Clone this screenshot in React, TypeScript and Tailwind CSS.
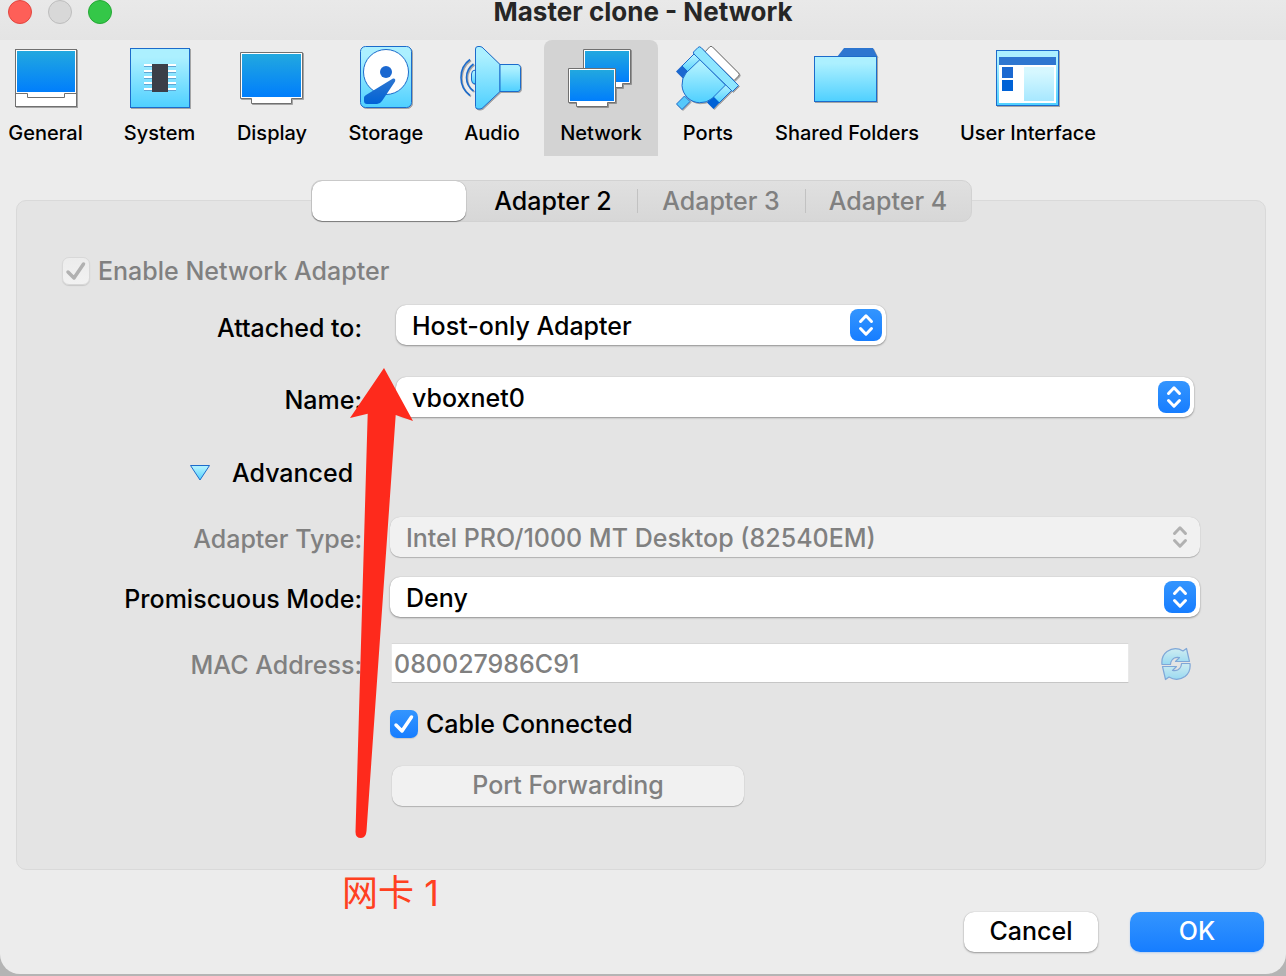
import type { ReactNode } from "react";

function Gradients() {
  return (
    <svg width="0" height="0" className="absolute" aria-hidden="true">
      <defs>
        <linearGradient id="screen" x1="0" y1="0" x2="0" y2="1">
          <stop offset="0" stopColor="#22a8df" />
          <stop offset="1" stopColor="#007efc" />
        </linearGradient>
        <linearGradient id="sky" x1="0" y1="0" x2="0" y2="1">
          <stop offset="0.15" stopColor="#acf0ff" />
          <stop offset="1" stopColor="#4fd0ff" />
        </linearGradient>
        <linearGradient id="deep" x1="0" y1="0" x2="0" y2="1">
          <stop offset="0" stopColor="#2e76d0" />
          <stop offset="1" stopColor="#0062d6" />
        </linearGradient>
      </defs>
    </svg>
  );
}

function Icon({ children, viewBox = "0 0 66 66" }: { children: ReactNode; viewBox?: string }) {
  return (
    <svg
      width="66"
      height="66"
      viewBox={viewBox}
      fill="none"
      aria-hidden="true"
      className="drop-shadow-[1px_1px_0px_#0000004d]"
    >
      {children}
    </svg>
  );
}

const GeneralIcon = () => (
  <Icon>
    <rect x="2.5" y="5.5" width="61" height="57" fill="#fff" stroke="#707070" />
    <rect x="4" y="7" width="58" height="41" fill="url(#screen)" />
    <path d="M2 49.500H14.500V53.500H51.500V49.500H64" stroke="#707070" />
  </Icon>
);

const SystemIcon = () => (
  <Icon>
    <rect x="3.500" y="4.500" width="59" height="59" fill="url(#sky)" stroke="#1c6bcb" />
    {[20, 26, 32, 38, 44].map((y) => (
      <g key={y}>
        <path d={`M17 ${y + 1}H49`} stroke="#fff" strokeWidth="2" />
        <path d={`M17 ${y + 2.5}H49`} stroke="#5fa6d4" />
      </g>
    ))}
    <rect x="25" y="20" width="16" height="28" fill="#3b3e48" />
  </Icon>
);

const DisplayIcon = () => (
  <Icon viewBox="1 0 66 66">
    <path d="M2.500 8.500H64.500V54.500H53.500V59.500H13.500V54.500H2.500Z" fill="#fff" stroke="#707070" />
    <rect x="4" y="10" width="59" height="43" fill="url(#screen)" />
  </Icon>
);

const StorageIcon = () => (
  <Icon>
    <rect x="7.500" y="2.500" width="51" height="61" rx="5" fill="url(#sky)" stroke="#1c6bcb" />
    <circle cx="33" cy="28" r="22.500" fill="#fff" stroke="#1c6bcb" />
    <circle cx="33" cy="28" r="6" fill="#1b68d0" />
    <path
      d="M40 34.500Q43 34 42 37.500L29 57Q27 60 24 60H14Q11 60 11 57V53.500Q11 52 13 51Z"
      fill="url(#deep)"
    />
  </Icon>
);

const AudioIcon = () => (
  <Icon viewBox="1 0 66 66">
    <g stroke="#1c6bcb">
      <path d="M17.500 26Q13.500 26 13.500 30V36Q13.500 40 17.500 40Z" fill="url(#sky)" />
      <path d="M15.500 20Q8.500 25 8.500 33.500T15.500 47M12 15.500Q3 22 3 33.500T12 51.500" strokeWidth="1.600" />
      <path
        d="M17.500 5Q17.500 2.500 20 2.500H22Q24 2.500 26 5L42 20.500V47.500L26 62.500Q24 65 22 65H20Q17.500 65 17.500 62.500Z"
        fill="url(#sky)"
      />
      <path d="M42 20.500H60Q62.500 21 62.500 23.500V44.500Q62.500 47 60 47.500H42Z" fill="url(#sky)" />
    </g>
  </Icon>
);

const NetworkIcon = () => (
  <Icon viewBox="2 0 66 66">
    <path d="M17.500 5.500H64.500V39.500H56.500V43.500H25.500V39.500H17.500Z" fill="#fff" stroke="#707070" />
    <rect x="19" y="7" width="44" height="31" fill="url(#screen)" />
    <path d="M2.500 24.500H49.500V58.500H41.500V62.500H10.500V58.500H2.500Z" fill="#fff" stroke="#707070" />
    <rect x="4" y="26" width="44" height="31" fill="url(#screen)" />
  </Icon>
);

const PortsIcon = () => (
  <Icon viewBox="1 0 66 66">
    <path d="M31 8L35.500 3Q37 1.500 38.500 3L64.500 29Q66 30.500 64.500 32L60 36.500Z" fill="#fff" stroke="#707070" />
    <path d="M20.500 9.500L8 22L15 29L28 16Z" fill="url(#sky)" stroke="#1c6bcb" />
    <path d="M8 21.500L2 27.500L9 34.500L15 28.500Z" fill="#1b68d0" />
    <path d="M57.500 46.500L45 59L38 52L51 39Z" fill="url(#sky)" stroke="#1c6bcb" />
    <path d="M45.500 58.500L39.500 65L33 58.500L39 52Z" fill="#0062d6" />
    <path d="M10.500 52L2.500 60L8 65.500L16 57.500Z" fill="#55c8fb" stroke="#1c6bcb" />
    <path d="M26 15.500L12 29A18.300 18.300 0 0 0 38 54.500L51.500 41Z" fill="url(#sky)" stroke="#1c6bcb" />
    <path d="M19.500 8L24 3.500Q25.500 2 27 3.500L64.500 41.500L58.500 47.500L20 10Q19 9 19.500 8Z" fill="#8ee6ff" stroke="#1c6bcb" />
  </Icon>
);

const FolderIcon = () => (
  <Icon viewBox="1 0 66 66">
    <path d="M24 13L31 4H60L64.500 13Z" fill="#2e76d0" />
    <rect x="1.500" y="12.500" width="62" height="45" fill="url(#sky)" stroke="#1c6bcb" />
  </Icon>
);

const InterfaceIcon = () => (
  <Icon>
    <rect x="1.500" y="6.500" width="62" height="55" fill="url(#sky)" stroke="#1c6bcb" />
    <rect x="4" y="13" width="57" height="8" fill="#2e76d0" />
    <rect x="4" y="21" width="57" height="38" fill="#fff" />
    <rect x="7" y="23" width="11" height="11" fill="#1b68d0" />
    <rect x="7" y="36" width="11" height="11" fill="#0062d6" />
    <rect x="29" y="23" width="30" height="34" fill="url(#sky)" opacity="0.500" />
  </Icon>
);

const tools = [
  { label: "General", width: "w-[107px]", icon: <GeneralIcon /> },
  { label: "System", width: "w-[105px]", icon: <SystemIcon /> },
  { label: "Display", width: "w-[104px]", icon: <DisplayIcon /> },
  { label: "Storage", width: "w-[108px]", icon: <StorageIcon /> },
  { label: "Audio", width: "w-[88px]", icon: <AudioIcon /> },
  { label: "Network", width: "w-[114px]", icon: <NetworkIcon />, active: true },
  { label: "Ports", width: "w-[84px]", icon: <PortsIcon /> },
  { label: "Shared Folders", width: "w-[178px]", icon: <FolderIcon /> },
  { label: "User Interface", width: "w-[168px]", icon: <InterfaceIcon /> },
];

function TitleBar() {
  return (
    <header className="grid h-10 grid-cols-[1fr_auto_1fr] items-start bg-linear-to-b from-[#e9e9e9] to-[#e4e4e4]">
      <div className="flex gap-4 pl-2">
        <button aria-label="Close" className="size-6 rounded-full border border-[#e2463f] bg-[#fe5f58]" />
        <button aria-label="Minimize" className="size-6 rounded-full border border-[#bdbdbd] bg-[#d8d8d8]" />
        <button aria-label="Zoom" className="size-6 rounded-full border border-[#24a834] bg-[#34c748]" />
      </div>
      <h1 className="text-[26px] leading-6 font-bold text-[#262626]">Master clone - Network</h1>
    </header>
  );
}

function Toolbar() {
  return (
    <nav className="-ml-2 flex gap-2">
      {tools.map((t) => (
        <button
          key={t.label}
          className={`flex h-[116px] shrink-0 flex-col items-center rounded-t-lg pt-1 text-xl leading-6 whitespace-nowrap ${t.width} ${
            t.active ? "bg-[#d3d3d3]" : ""
          }`}
        >
          {t.icon}
          <span className="mt-[11px]">{t.label}</span>
        </button>
      ))}
    </nav>
  );
}

function Tabs() {
  return (
    <div
      role="tablist"
      className="relative z-10 mx-auto -mb-[22px] flex items-center rounded-[10px] border border-[#d2d2d2] bg-linear-to-b from-[#e0e0e0] to-[#d7d7d7]"
    >
      <button
        role="tab"
        aria-selected="true"
        aria-label="Adapter 1"
        className="mr-1 h-10 w-[154px] rounded-[10px] bg-white shadow-[0_1px_1px_#00000066,0_0_1px_#00000066]"
      />
      <button role="tab" aria-selected="false" className="h-10 w-[167px]">Adapter 2</button>
      <span className="h-6 w-px bg-[#c2c2c2]" />
      <button role="tab" disabled className="h-10 w-[167px] text-[#808080]">Adapter 3</button>
      <span className="h-6 w-px bg-[#c2c2c2]" />
      <button role="tab" disabled className="h-10 w-[165px] text-[#808080]">Adapter 4</button>
    </div>
  );
}

function Dropdown({ id, value, disabled, className }: { id: string; value: string; disabled?: boolean; className: string }) {
  return (
    <div className={`relative ${className}`}>
      <select
        id={id}
        disabled={disabled}
        className="block h-10 w-full appearance-none rounded-[10px] bg-white px-4 pt-0.5 text-black opacity-100 shadow-[0_1px_2px_#00000059,0_0_1px_#00000040] disabled:bg-[#f1f1f1] disabled:text-[#808080] disabled:shadow-[0_1px_1px_#00000033,0_0_1px_#00000033]"
      >
        <option>{value}</option>
      </select>
      <span
        className={`pointer-events-none absolute top-1 right-1 flex size-8 items-center justify-center rounded-lg ${
          disabled ? "text-[#b1b1b1]" : "bg-linear-to-b from-[#3395fe] to-[#167dff] text-white"
        }`}
      >
        <svg width="16" height="24" viewBox="0 0 16 24" fill="none" stroke="currentColor" strokeWidth="3" strokeLinecap="round" strokeLinejoin="round" aria-hidden="true">
          <path d="M2.500 8.500L8 2.800L13.500 8.500M2.500 15.500L8 21.200L13.500 15.500" />
        </svg>
      </span>
    </div>
  );
}

function Check({ id, label, disabled, className }: { id: string; label: string; disabled?: boolean; className: string }) {
  return (
    <div className={`flex h-7 items-center gap-2 ${className}`}>
      <span className="relative size-7">
        <input
          id={id}
          type="checkbox"
          defaultChecked
          disabled={disabled}
          className="block size-7 appearance-none rounded-[7px] bg-linear-to-b from-[#3395fe] to-[#167dff] shadow-[0_1px_1px_#0000001f] disabled:border disabled:border-[#d8d8d8] disabled:from-[#ececec] disabled:to-[#f2f2f2]"
        />
        <svg viewBox="0 0 28 28" className={`pointer-events-none absolute inset-0 ${disabled ? "text-[#b1b1b1]" : "text-white"}`} fill="none" stroke="currentColor" strokeWidth="3.500" strokeLinecap="round" strokeLinejoin="round" aria-hidden="true">
          <path d="M6 15L12 21L21.500 7" />
        </svg>
      </span>
      <label htmlFor={id} className={disabled ? "text-[#808080]" : ""}>{label}</label>
    </div>
  );
}

const labelClass = "w-[345px] shrink-0 pt-1 text-right";
const mainLabelClass = "w-[345px] shrink-0 pt-1.5 text-right";

function RefreshIcon() {
  return (
    <svg width="30" height="34" viewBox="0 0 30 34" fill="url(#sky)" stroke="#1c6bcb" strokeWidth="1.200" strokeLinejoin="round" className="opacity-50" aria-hidden="true">
      <path d="M1 17.500Q0 9 6 4.500Q14-1 22 4L25.500 1.500L28.500 14.500H14.500L18.500 10.500Q13.500 9.500 11 13Q9.500 15 9.500 17.500Z" />
      <path d="M29 16.500Q30 25 24 29.500Q16 35 8 30L4.500 32.500L1.500 19.500H15.500L11.500 23.500Q16.500 24.500 19 21Q20.500 19 20.500 16.500Z" />
    </svg>
  );
}

function Panel() {
  return (
    <section className="rounded-[10px] border border-[#d9d9d9] bg-[#e4e4e4] pt-14 pb-[63px]">
      <Check id="enable" label="Enable Network Adapter" disabled className="ml-[45px]" />
      <div className="mt-5 flex items-center">
        <label htmlFor="attached" className={mainLabelClass}>Attached to:</label>
        <Dropdown id="attached" value="Host-only Adapter" className="ml-[34px] w-[490px]" />
      </div>
      <div className="mt-8 flex items-center">
        <label htmlFor="name" className={mainLabelClass}>Name:</label>
        <Dropdown id="name" value="vboxnet0" className="mr-[71px] ml-[34px] flex-1" />
      </div>
      <button aria-expanded="true" className="mt-9 mb-6 ml-[172px] flex h-10 items-center gap-[21px]">
        <svg width="22" height="18" viewBox="0 0 22 18" aria-hidden="true">
          <path d="M1.500 1.500H20.500L11 16Z" fill="url(#sky)" stroke="#1c6bcb" strokeLinejoin="round" />
        </svg>
        Advanced
      </button>
      <div className="flex items-center">
        <label htmlFor="type" className={`${labelClass} text-[#808080]`}>Adapter Type:</label>
        <Dropdown id="type" value="Intel PRO/1000 MT Desktop (82540EM)" disabled className="mr-[65px] ml-7 flex-1" />
      </div>
      <div className="mt-5 flex items-center">
        <label htmlFor="promiscuous" className={labelClass}>Promiscuous Mode:</label>
        <Dropdown id="promiscuous" value="Deny" className="mr-[65px] ml-7 flex-1" />
      </div>
      <div className="mt-[26px] flex items-center">
        <label htmlFor="mac" className={`${labelClass} text-[#808080]`}>MAC Address:</label>
        <input
          id="mac"
          disabled
          defaultValue="080027986C91"
          className="ml-[29px] h-10 min-w-0 flex-1 border border-t-[#d8d8d8] border-r-[#e9e9e9] border-b-[#c6c6c6] border-l-[#e9e9e9] bg-white px-0.5 pt-0.5 text-[#808080]"
        />
        <button aria-label="Generate a new MAC address" disabled className="mr-[74px] ml-8 pt-0.5">
          <RefreshIcon />
        </button>
      </div>
      <Check id="cable" label="Cable Connected" className="mt-[27px] ml-[373px]" />
      <button
        disabled
        className="mt-7 ml-[375px] block h-10 w-[352px] rounded-[10px] bg-[#f1f1f1] pb-[3px] text-[#808080] shadow-[0_1px_1px_#00000033,0_0_1px_#00000033]"
      >
        Port Forwarding
      </button>
    </section>
  );
}

function Annotation() {
  return (
    <div className="pointer-events-none absolute top-[368px] left-[342px] text-[#ff4020]">
      <svg width="72" height="472" viewBox="342 368 72 472" aria-hidden="true" className="block">
        <path
          d="M384 368L413 421L395.700 415L366.500 831Q366 838 361 838Q355.500 838 355.500 832L367.700 413.700L350 418Z"
          fill="#fe2a1c"
        />
      </svg>
      <p className="mt-[33px] font-['Inter','Noto_Sans_CJK_SC',sans-serif] text-4xl font-normal whitespace-nowrap">网卡 1</p>
    </div>
  );
}

export default function App() {
  return (
    <div className="bg-[#b4b4b4] pb-0.5 font-['Inter','Noto_Sans_CJK_SC',sans-serif] text-[25px] leading-8 font-medium text-black">
      <Gradients />
      <div className="relative overflow-hidden rounded-b-[20px] bg-[#ececec]">
        <TitleBar />
        <Toolbar />
        <main className="mt-6 mr-5 ml-4 flex flex-col">
          <Tabs />
          <Panel />
        </main>
        <footer className="mt-[42px] flex justify-end gap-8 pr-[22px] pb-[22px]">
          <button className="h-10 w-[134px] rounded-[10px] bg-white pb-[3px] shadow-[0_1px_2px_#00000059,0_0_1px_#00000040]">
            Cancel
          </button>
          <button className="h-10 w-[134px] rounded-[10px] bg-linear-to-b from-[#3395fe] to-[#167dff] pb-[3px] text-white shadow-[0_1px_2px_#167dff40]">
            OK
          </button>
        </footer>
        <Annotation />
      </div>
    </div>
  );
}
